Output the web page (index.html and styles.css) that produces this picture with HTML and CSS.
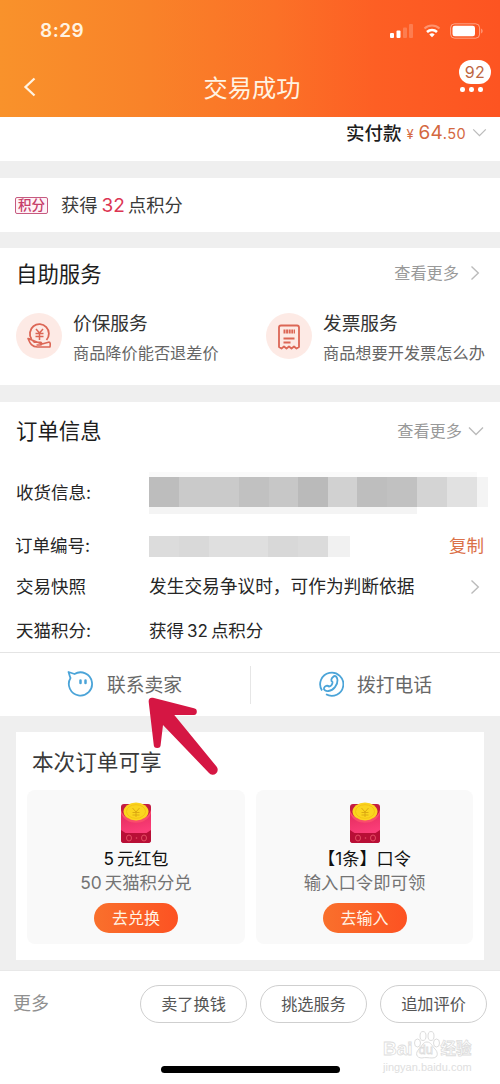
FILE: index.html
```
<!DOCTYPE html>
<html lang="zh-CN">
<head>
<meta charset="utf-8">
<title>交易成功</title>
<link rel="stylesheet" href="styles.css">
</head>
<body>
<svg class="defs" width="0" height="0">
  <defs>
    <linearGradient id="packet" x1="0" y1="0" x2="0.3" y2="1"><stop offset="0" stop-color="#e02a5a"/><stop offset="1" stop-color="#fb3d78"/></linearGradient>
    <symbol id="right" viewBox="0 0 10 16"><path d="M1.5 1.5 8.3 8l-6.800 6.500"/></symbol>
    <symbol id="down" viewBox="0 0 16 10"><path d="M1 1.500 8 8.500 15 1.500"/></symbol>
    <symbol id="redpacket" viewBox="0 0 32 42">
      <rect x="1" y="2" width="30" height="39" rx="3" fill="#c41c42"/>
      <path d="M1 8c3 13 27 13 30 0v24H1z" fill="url(#packet)"/>
      <path d="M1 8c3 13 27 13 30 0v3c-4 13-26 13-30 0z" fill="#fa4d6c"/>
      <ellipse cx="16" cy="9.500" rx="12.500" ry="9" fill="#fbd51f"/>
      <ellipse cx="16" cy="9.500" rx="9.500" ry="6.800" fill="none" stroke="#f1bd13" stroke-width=".8"/>
      <path d="m12.500 6 3.500 4 3.500-4M16 10v5M12.500 10.500h7M12.500 13h7" fill="none" stroke="#d9a512" stroke-width=".9"/>
      <path d="M1 31v-3l4.500 3h21l4.500-3v10a3 3 0 0 1-3 3H4a3 3 0 0 1-3-3z" fill="#b80f36"/>
      <ellipse cx="9" cy="36" rx="2.500" ry="3" fill="none" stroke="#e34d62"/>
      <ellipse cx="24" cy="36" rx="2.500" ry="3" fill="none" stroke="#e34d62"/>
      <circle cx="16.500" cy="36" r=".8" fill="#e34d62"/>
    </symbol>
  </defs>
</svg>
<div class="screen">
  <header class="header">
    <div class="status">
      <span class="time">8:29</span>
      <div class="signals">
        <svg width="24" height="16" viewBox="0 0 24 16" fill="#fff"><rect x="0" y="10" width="4" height="5" rx="1"/><rect x="6.500" y="7.500" width="4" height="7.500" rx="1"/><g opacity=".2"><rect x="13" y="4.500" width="4" height="10.500" rx="1"/><rect x="19" y="1" width="4" height="14" rx="1"/></g></svg>
        <svg width="18" height="16" viewBox="0 0 18 16" fill="none" stroke="#fff"><path d="M1.500 5.500a11 11 0 0 1 15 0" stroke-width="2" opacity=".35"/><path d="M4 9a7.400 7.400 0 0 1 10 0" stroke-width="2.600"/><path d="M6.300 11.500a4 4 0 0 1 5.400 0L9 14.300z" fill="#fff" stroke="none"/></svg>
        <svg width="34" height="16" viewBox="0 0 34 16"><rect x=".6" y=".8" width="29" height="14.400" rx="4" fill="none" stroke="#fff" stroke-opacity=".45"/><rect x="2.500" y="2.800" width="22.500" height="10.400" rx="2.300" fill="#fff"/><path d="M31.300 5.500c1.600.8 1.600 4.200 0 5z" fill="#fff" opacity=".5"/></svg>
      </div>
    </div>
    <div class="nav">
      <svg class="back" width="14" height="20" viewBox="0 0 14 20"><path d="M11.500 1.500 2.500 10l9 8.500"/></svg>
      <h1>交易成功</h1>
      <div class="menu"><span class="count">92</span><span class="dots"><i></i><i></i><i></i></span></div>
    </div>
  </header>

  <section class="paid">
    <span class="paid-label">实付款</span><span class="yen">¥</span><span class="price">64<small>.50</small></span>
    <svg class="chev" width="15" height="9"><use href="#down"/></svg>
  </section>

  <section class="points"><span class="tag">积分</span><span>获得<b>32</b>点积分</span></section>

  <section class="services">
    <div class="head"><h2>自助服务</h2><span class="more">查看更多<svg class="chev" width="10" height="16"><use href="#right"/></svg></span></div>
    <div class="service-list">
      <div class="service">
        <svg class="round" width="46" height="46" viewBox="0 0 46 46"><circle class="halo" cx="23" cy="23" r="23"/><g class="line"><path d="M15.500 26A9.500 9.500 0 1 1 30.500 27"/><path d="M20 16l3.500 4 3.500-4M23.500 20v7M19.500 20.500h8M19.500 23.500h8" stroke-width="1.500"/><path d="M12 25.500c3-.3 4.500 2 6.500 3.800h6c2 .4 1.500 2.700-.5 2.700h-3.500M26 31l6.500-1.800c2.300-.4 1.800 2.300 1.500 4.800H21.500c-5.500 0-7.500-3.500-9.500-8.500z" stroke-width="1.600"/></g></svg>
        <div><h3>价保服务</h3><p>商品降价能否退差价</p></div>
      </div>
      <div class="service">
        <svg class="round" width="46" height="46" viewBox="0 0 46 46"><circle class="halo" cx="23" cy="23" r="23"/><g class="line"><path d="M13 34V14.500c0-1.200.8-2 2-2h16c1.200 0 2 .8 2 2V34l-2.500 1.500L28 33.500l-2.500 2-2.500-2-2.500 2-2.500-2-2.500 2z"/><path d="M17.500 25.500h11M17.500 29.500h7"/></g><path class="code" d="M17.500 18.500h11.500"/></svg>
        <div><h3>发票服务</h3><p>商品想要开发票怎么办</p></div>
      </div>
    </div>
  </section>

  <section class="order">
    <div class="head"><h2>订单信息</h2><span class="more expand">查看更多<svg class="chev" width="16" height="10"><use href="#down"/></svg></span></div>
    <div class="row address"><span>收货信息:</span><div class="mosaic"></div></div>
    <div class="row number"><span>订单编号:</span><div class="mosaic-small"></div><a>复制</a></div>
    <div class="row snapshot"><span>交易快照</span><span>发生交易争议时，可作为判断依据</span><svg class="chev" width="10" height="16"><use href="#right"/></svg></div>
    <div class="row tmall"><span>天猫积分:</span><span>获得<i>32</i>点积分</span></div>
  </section>

  <section class="contact">
    <div class="contact-item">
      <svg width="26" height="28" viewBox="0 0 26 28"><path d="M1.500 2 7.500 4a11.600 11.600 0 1 1-4 4C2.500 6 2.300 4 1.500 2z"/><path class="eyes" d="M13.500 10.500v2.500M18.500 10.500v2.500"/></svg>
      <span>联系卖家</span>
    </div>
    <div class="contact-item">
      <svg width="26" height="28" viewBox="0 0 26 28"><path d="M4 20.500A11.600 11.600 0 1 1 8 24.300"/><path d="M15 7c2.500-2.500 4.200.2 4.500 3 .3 5-4 10.500-9 11-3 .3-5-1-4.500-3 .8-2 3.500-3 5-1.500 2.200-.5 3.500-2.300 3.500-4.500-2-1-1.300-3.500.5-5z"/></svg>
      <span>拨打电话</span>
    </div>
  </section>

  <section class="benefits">
    <h2>本次订单可享</h2>
    <div class="offers">
      <div class="offer"><svg width="32" height="42"><use href="#redpacket"/></svg><h3>5<span class="gap"></span>元红包</h3><p>50<span class="gap"></span>天猫积分兑</p><button>去兑换</button></div>
      <div class="offer"><svg width="32" height="42"><use href="#redpacket"/></svg><h3>【1条】口令</h3><p>输入口令即可领</p><button>去输入</button></div>
    </div>
  </section>

  <footer class="footer">
    <div class="actions"><span class="other">更多</span><button>卖了换钱</button><button>挑选服务</button><button>追加评价</button></div>
    <div class="home"></div>
    <div class="watermark">
      <div class="brand"><span>Bai</span><span class="paw"><svg width="28" height="30" viewBox="0 0 28 30"><ellipse cx="4.500" cy="13" rx="3" ry="4"/><ellipse cx="10" cy="6" rx="3" ry="4.500"/><ellipse cx="18" cy="6" rx="3" ry="4.500"/><ellipse cx="23.500" cy="13" rx="3" ry="4"/><path d="M14 12c4 0 5 4 8 7s4 9-3 9c-3 0-7-1-10 0-6 0-7-5-3-9s4-7 8-7z"/></svg><em>du</em></span><span class="cn">经验</span></div>
      <div class="url">jingyan.baidu.com</div>
    </div>
  </footer>
  <svg class="pointer" width="76" height="84" viewBox="0 0 76 84"><path d="M4.700 10Q4.300 5 9 5.800L50 16.300a3.400 3.400 0 0 1 0 6.700L30.300 23 72.500 74.500a4.600 4.600 0 0 1-7.500 6.500L19 33l-2.300 19.500a3.500 3.500 0 0 1-7 0z"/></svg>
</div>
</body>
</html>
```

FILE: styles.css
```
* { box-sizing: border-box; }
body { margin: 0; font-family: Inter, "Noto Sans CJK SC", sans-serif; color: #222; }
h1, h2, h3, p { margin: 0; font-weight: 400; }
b, i, em { font-style: normal; font-weight: 400; }
svg { display: block; flex: none; }
.defs { position: absolute; }
button { font-family: inherit; padding: 0; }

.screen { position: relative; width: 500px; height: 1084px; background: #efefef; overflow: hidden; white-space: nowrap; }

.header { height: 117px; background: linear-gradient(90deg, #f9922b 0%, #f98229 30%, #fb7127 55%, #fd5f24 75%, #fd5421 100%); color: #fff3e2; }
.status { height: 61px; display: flex; justify-content: space-between; align-items: center; padding: 0 16px 0 40px; }
.time { font-size: 19px; font-weight: 600; line-height: 24px; letter-spacing: .5px; }
.signals { display: flex; gap: 9px; }
.nav { height: 56px; display: grid; grid-template-columns: 54px 1fr 54px; align-items: center; }
.back { margin: -5px 0 0 23px; }
.back path { fill: none; stroke: #fff3e2; stroke-width: 2.300; }
h1 { text-align: center; font-size: 24.200px; line-height: 32px; padding-left: 4px; }
.menu { display: flex; flex-direction: column; align-items: center; gap: 3px; width: 32px; margin: -23px 0 0 13px; }
.count { width: 32px; height: 24px; border-radius: 12px; background: #fff; color: #bd6541; font-size: 16px; line-height: 24px; text-align: center; letter-spacing: .3px; margin-top: -3px; }
.dots { display: flex; gap: 4.600px; margin-right: 7px; }
.dots i { width: 4.400px; height: 4.400px; border-radius: 50%; background: #fff; }

.chev { fill: none; stroke: #bbb; stroke-width: 1.400; }
.paid { height: 44px; background: #fff; display: flex; align-items: center; justify-content: flex-end; padding: 0 13px 14px 0; }
.paid-label { font-size: 18.500px; font-weight: 500; color: #1d1d1d; }
.yen { font-size: 13px; color: #d4683f; margin: 4px 5px 0 5px; }
.price { font-size: 19px; color: #d4683f; letter-spacing: .1px; }
.price small { font-size: 14.500px; letter-spacing: .4px; }
.paid .chev { margin-left: 6px; }

.points { margin-top: 17px; height: 54px; background: #fff; display: flex; align-items: center; gap: 13px; padding-left: 15px; padding-bottom: 2px; font-size: 18.300px; color: #3a3a3a; }
.points b { color: #dc3553; font-size: 19px; margin: 0 3px 0 4px; }
.tag { width: 33px; height: 17px; border: 1px solid #c65b80; border-radius: 2px; color: #c63d69; background: #fff2f7; font-size: 13.500px; font-weight: 500; line-height: 14px; text-align: center; margin-top: 2px; }

.services { margin-top: 16px; height: 137px; background: #fff; }
.head { display: flex; justify-content: space-between; align-items: center; padding: 0 20px 0 16px; height: 51px; }
h2 { font-size: 21.400px; line-height: 30px; color: #1d1d1d; }
.more { display: flex; align-items: center; font-size: 16.200px; line-height: 24px; color: #999; gap: 11px; margin-top: -1px; }
.expand { gap: 6px; margin-top: 0; }
.service-list { display: grid; grid-template-columns: 250px 250px; padding: 12px 0 0 16px; }
.service { display: flex; gap: 11px; }
.service .round { margin-top: 2px; }
.halo { fill: #fdeae5; }
.line { fill: none; stroke: #dc6655; stroke-width: 1.800; stroke-linejoin: round; }
.code { stroke: #dc6655; stroke-width: 4; stroke-dasharray: 2 .6; fill: none; }
.service h3 { font-size: 18.700px; line-height: 26px; color: #333; }
.service p { font-size: 16.200px; line-height: 24px; margin-top: 4px; color: #666; }

.order { margin-top: 17px; height: 251px; background: #fff; border-bottom: 1px solid #e4e4e4; }
.order .head { height: 58px; padding-right: 16px; }
.row { display: grid; grid-template-columns: 133px 1fr auto; align-items: center; padding-left: 16px; font-size: 17.500px; line-height: 26px; color: #262626; }
.address { height: 66px; }
.number { height: 40px; padding-left: 15px; padding-right: 16px; }
.number .mosaic-small { margin-left: 1px; }
.snapshot { height: 42px; padding-right: 20px; }
.tmall { height: 45px; }
.tmall i { margin: 0 3px; font-size: 17px; }
.number a { color: #db7148; }
.snapshot span:nth-child(2) { font-size: 17.700px; }
.mosaic { width: 339px; height: 42px; background:
  linear-gradient(90deg, #bdbdbd 30px, #cacaca 30px 90px, #c1c1c1 90px 120px, #c7c7c7 120px 149px, #bababa 149px 179px, #d1d1d1 179px 208px, #bebebe 208px 238px, #c1c1c1 238px 268px, #d4d4d4 268px 298px, #e1e1e1 298px 328px, #f4f4f4 328px) 0 5px / 339px 30px no-repeat,
  linear-gradient(#f4f4f4, #f4f4f4) 0 35px / 268px 7px no-repeat,
  linear-gradient(#fafafa, #fafafa) 0 0 / 328px 5px no-repeat; }
.mosaic-small { width: 201px; height: 21px; background: linear-gradient(90deg, #dcdcdc 30px, #d9d9d9 30px 60px, #dfdfdf 60px 119px, #d8d8d8 119px 149px, #dbdbdb 149px 179px, #f1f1f1 179px); }

.contact { height: 63px; background: #fff; display: grid; grid-template-columns: 1fr 1fr; align-items: center; }
.contact-item { height: 38px; display: flex; align-items: center; gap: 14px; padding: 0 0 2px 67px; font-size: 18.800px; color: #686868; }
.contact-item + .contact-item { border-left: 1px solid #e6e6e6; gap: 13px; }
.contact-item svg { fill: none; stroke: #4ba4d8; stroke-width: 1.800; stroke-linejoin: round; }
.contact-item .eyes { stroke-width: 2.500; stroke-linecap: round; }

.benefits { margin: 16px 16px 0; height: 228px; background: #fff; padding: 15px 11px 0; }
.benefits h2 { padding-left: 5px; color: #3a3a3a; font-size: 21.600px; }
.offers { display: grid; grid-template-columns: 218px 217px; gap: 11px; margin-top: 13px; }
.offer { height: 154px; background: #f9f9f9; border-radius: 8px; display: flex; flex-direction: column; align-items: center; padding-top: 12px; }
.offer h3 { font-size: 17.200px; line-height: 25px; color: #111; margin-top: 2px; }
.offer p { font-size: 17.400px; line-height: 24px; color: #747474; }
.gap { display: inline-block; width: 3px; }
.offer button { width: 84px; height: 30px; border: 0; border-radius: 15px; background: linear-gradient(90deg, #f9702c, #fd5222); color: #fff3e4; font-size: 16px; line-height: 28px; margin-top: 8px; }

.footer { position: relative; margin-top: 10px; height: 114px; background: #fff; border-top: 1px solid #e8e8e8; }
.actions { display: grid; grid-template-columns: 114px 107px 107px 107px; column-gap: 13px; padding: 14px 0 0 13px; align-items: center; }
.other { font-size: 18px; line-height: 26px; color: #909090; }
.footer button { height: 38px; border: 1px solid #cfcfcf; border-radius: 19px; background: #fff; color: #555; font-size: 16.200px; line-height: 34px; }
.home { width: 179px; height: 7px; border-radius: 4px; background: #000; margin: 43px auto 0; }
.watermark { position: absolute; left: 383px; top: 59px; color: #fff; }
.brand { display: flex; align-items: flex-end; height: 30px; font: 700 19px/22px "Liberation Sans", "Noto Sans CJK SC", sans-serif; -webkit-text-stroke: .8px #ddd; }
.paw { position: relative; width: 28px; height: 30px; }
.paw svg { fill: #fff; stroke: #ddd; stroke-width: 1; }
.paw em { position: absolute; left: 6px; top: 11px; font-size: 13px; line-height: 18px; }
.cn { font-size: 15.500px; }
.url { font: 11px/14px "Liberation Sans", sans-serif; color: #dedede; }

.pointer { position: absolute; left: 144px; top: 692px; fill: #d51643; }
```
